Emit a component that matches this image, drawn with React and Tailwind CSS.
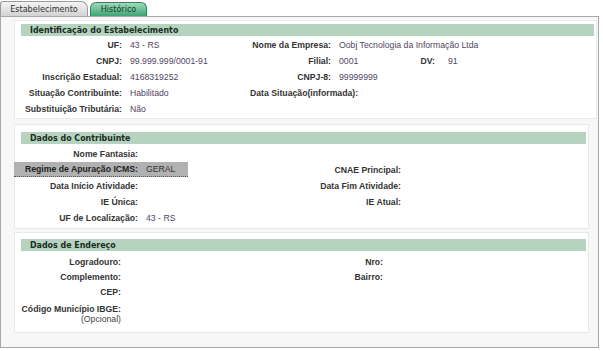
import React from "react";

const SANS = "font-['Liberation_Sans',Arial,sans-serif]";
const VERD = "font-['DejaVu_Sans_Condensed','DejaVu_Sans',Verdana,sans-serif]";

function Header({ children }) {
  return (
    <div className={`h-[12px] ml-[6px] mr-[2px] bg-[#b5d3bf] pl-[9px] text-[8.8px] leading-[12px] font-bold text-[#1c2b22] ${VERD}`}>
      {children}
    </div>
  );
}

function L({ w, children }) {
  return (
    <div className={`${w} shrink-0 text-right font-bold text-[#333] whitespace-nowrap`}>{children}</div>
  );
}

function V({ w, pl = "pl-[8px]", children }) {
  return (
    <div className={`${w} ${pl} shrink-0 text-[#51475f] whitespace-nowrap`}>{children}</div>
  );
}

export default function App() {
  return (
    <div className={`w-[603px] h-[351px] bg-white overflow-hidden ${SANS} text-[8.7px] leading-[16px]`}>
      {/* tabs */}
      <div className="flex items-end h-[16px]">
        <div className={`h-[15px] w-[88px] border border-b-0 border-[#9a9a9a] rounded-tl-[3px] rounded-tr-[7px] bg-gradient-to-b from-[#f4f4f4] to-[#d2d2d2] flex items-center justify-center text-[9px] leading-[14px] text-[#333] ${VERD}`}>
          Estabelecimento
        </div>
        <div className={`ml-[2px] h-[14px] w-[57px] border border-b-0 border-[#2f8660] rounded-t-[6px] bg-gradient-to-b from-[#9edbbb] to-[#36a673] flex items-center justify-center text-[9px] leading-[13px] text-[#173f2e] ${VERD}`}>
          Histórico
        </div>
      </div>

      {/* frame */}
      <div className="w-[599px] h-[332px] border border-[#a3aca7] bg-[#f7f7f7] pl-[13px] pt-[3px] flex flex-col">
        {/* Section 1 */}
        <div className="w-[583px] border border-[#e9e9e9] bg-white pt-[3px] pb-[1px]">
          <Header>Identificação do Estabelecimento</Header>
          <div className="pt-[1px]">
            <div className="flex h-[16px]">
              <L w="w-[107px]">UF:</L>
              <V w="w-[128px]">43 - RS</V>
              <L w="w-[81px]">Nome da Empresa:</L>
              <V w="w-[200px]">Oobj Tecnologia da Informação Ltda</V>
            </div>
            <div className="flex h-[16px]">
              <L w="w-[107px]">CNPJ:</L>
              <V w="w-[128px]">99.999.999/0001-91</V>
              <L w="w-[81px]">Filial:</L>
              <V w="w-[78px]">0001</V>
              <L w="w-[26px]">DV:</L>
              <V w="w-[40px]" pl="pl-[13px]">91</V>
            </div>
            <div className="flex h-[16px]">
              <L w="w-[107px]">Inscrição Estadual:</L>
              <V w="w-[128px]">4168319252</V>
              <L w="w-[81px]">CNPJ-8:</L>
              <V w="w-[78px]">99999999</V>
            </div>
            <div className="flex h-[16px]">
              <L w="w-[107px]">Situação Contribuinte:</L>
              <V w="w-[128px]">Habilitado</V>
              <L w="w-[81px]">Data Situação(informada):</L>
              <V w="w-[78px]"></V>
            </div>
            <div className="flex h-[16px]">
              <L w="w-[107px]">Substituição Tributária:</L>
              <V w="w-[128px]">Não</V>
            </div>
          </div>
        </div>

        {/* Section 2 */}
        <div className="mt-[5px] w-[575px] border border-[#e9e9e9] bg-white pt-[7px] pb-[2px]">
          <Header>Dados do Contribuinte</Header>
          <div className="pt-[2px]">
            <div className="flex h-[16px]">
              <div className="flex w-[173px] shrink-0">
                <L w="w-[123px]">Nome Fantasia:</L>
              </div>
            </div>
            <div className="flex h-[16px]">
              <div className="flex w-[174px] -ml-[1px] shrink-0 bg-[#b1b1b1] border-b border-dotted border-[#555] h-[15px] leading-[15px]">
                <div className="w-[124px] shrink-0 text-right font-bold text-[#222] whitespace-nowrap">Regime de Apuração ICMS:</div>
                <div className="pl-[8px] text-[#333] whitespace-nowrap">GERAL</div>
              </div>
              <div className="w-[113px] shrink-0"></div>
              <L w="w-[100px]">CNAE Principal:</L>
            </div>
            <div className="flex h-[16px]">
              <div className="flex w-[173px] shrink-0">
                <L w="w-[123px]">Data Início Atividade:</L>
              </div>
              <div className="w-[113px] shrink-0"></div>
              <L w="w-[100px]">Data Fim Atividade:</L>
            </div>
            <div className="flex h-[16px]">
              <div className="flex w-[173px] shrink-0">
                <L w="w-[123px]">IE Única:</L>
              </div>
              <div className="w-[113px] shrink-0"></div>
              <L w="w-[100px]">IE Atual:</L>
            </div>
            <div className="flex h-[16px]">
              <div className="flex w-[173px] shrink-0">
                <L w="w-[123px]">UF de Localização:</L>
                <V w="w-[50px]">43 - RS</V>
              </div>
            </div>
          </div>
        </div>

        {/* Section 3 */}
        <div className="mt-[3px] w-[575px] border border-[#e9e9e9] bg-white pt-[6px] pb-[8px]">
          <Header>Dados de Endereço</Header>
          <div className="pt-[4px]">
            <div className="flex h-[15px] leading-[15px]">
              <L w="w-[106px]">Logradouro:</L>
              <V w="w-[182px]"></V>
              <L w="w-[80px]">Nro:</L>
            </div>
            <div className="flex h-[15px] leading-[15px]">
              <L w="w-[106px]">Complemento:</L>
              <V w="w-[182px]"></V>
              <L w="w-[80px]">Bairro:</L>
            </div>
            <div className="flex h-[15px] leading-[15px]">
              <L w="w-[106px]">CEP:</L>
            </div>
            <div className="flex pt-[4px] leading-[10px]">
              <div className="w-[106px] shrink-0 text-right whitespace-nowrap">
                <div className="font-bold text-[#333]">Código Município IBGE:</div>
                <div className="text-[#444]">(Opcional)</div>
              </div>
            </div>
          </div>
        </div>
      </div>
    </div>
  );
}
